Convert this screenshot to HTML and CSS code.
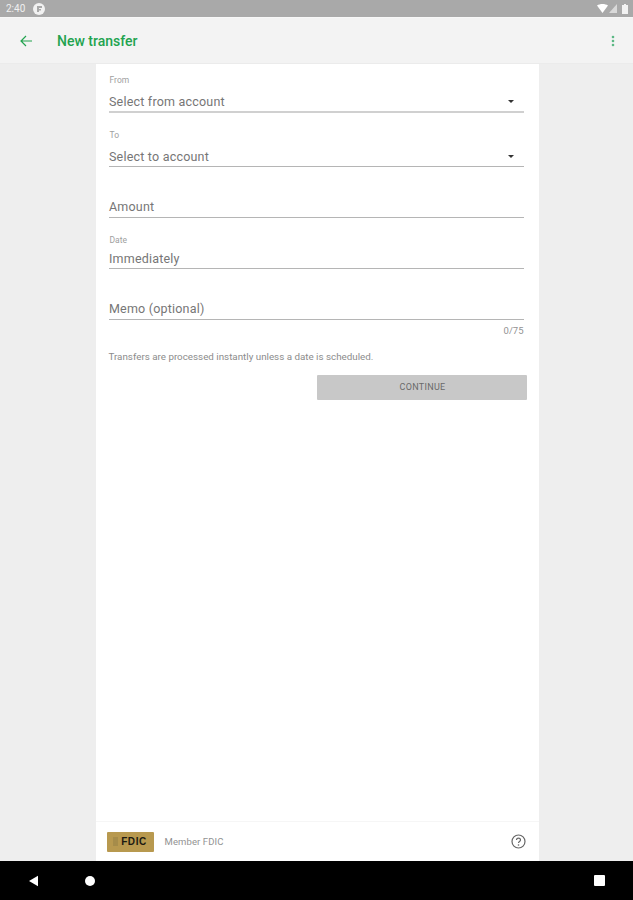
FILE: index.html
```html
<!DOCTYPE html>
<html lang="en">
<head>
    <meta charset="UTF-8">
    <meta name="viewport" content="width=device-width, initial-scale=1.0">
    <title>New transfer</title>
    <link rel="stylesheet" href="styles.css">
</head>
<body>
    <div class="status-bar">
        <div class="status-left">
            <span class="time">2:40</span>
            <span class="status-badge">
                <svg width="8" height="8" viewBox="0 0 8 8"><path d="M2 7V1h5v2H4v1h2v1.5H4V7z" fill="#a9a9a9"/></svg>
            </span>
        </div>
        <div class="status-right">
            <svg width="11" height="9" viewBox="0 0 11 9"><path d="M0 1.5C3 -.5 8 -.5 11 1.5L5.5 9z" fill="#fff"/></svg>
            <svg class="signal" width="8" height="9" viewBox="0 0 8 9"><path d="M8 0v9H0z" fill="#d9d9d9"/></svg>
            <svg width="6" height="10" viewBox="0 0 6 10"><path d="M2 0h2v1h2v9H0V1h2z" fill="#f2f2f2"/></svg>
        </div>
    </div>

    <div class="toolbar">
        <svg class="back-icon" width="14" height="14" viewBox="0 0 14 14"><path d="M13 7H2M7 2 2 7l5 5" fill="none" stroke="#22a34f" stroke-width="1.2"/></svg>
        <span class="toolbar-title">New transfer</span>
        <svg class="more-icon" width="4" height="12" viewBox="0 0 4 12"><circle cx="2" cy="2" r="1.3"/><circle cx="2" cy="6" r="1.3"/><circle cx="2" cy="10" r="1.3"/></svg>
    </div>

    <div class="content">
        <div class="card">
            <div class="form">
                <div class="field field-from">
                    <label>From</label>
                    <div class="value">Select from account<span class="caret"></span></div>
                </div>
                <div class="field field-to">
                    <label>To</label>
                    <div class="value">Select to account<span class="caret"></span></div>
                </div>
                <div class="field field-amount">
                    <div class="value">Amount</div>
                </div>
                <div class="field field-date">
                    <label>Date</label>
                    <div class="value">Immediately</div>
                </div>
                <div class="field field-memo">
                    <div class="value">Memo (optional)</div>
                </div>
                <div class="counter">0/75</div>
                <p class="helper">Transfers are processed instantly unless a date is scheduled.</p>
                <div class="actions">
                    <button class="continue" disabled>CONTINUE</button>
                </div>
            </div>
            <div class="footer">
                <div class="fdic-logo"><span class="fdic-mark"></span>FDIC</div>
                <span class="member">Member FDIC</span>
                <svg class="help-icon" width="15" height="15" viewBox="0 0 15 15">
                    <circle cx="7.5" cy="7.5" r="6.5" fill="none" stroke="#666" stroke-width="1.2"/>
                    <path d="M5.5 6c0-2.6 4-2.6 4 0 0 1.5-2 1.5-2 3" fill="none" stroke="#666" stroke-width="1.2"/>
                    <circle cx="7.5" cy="11" r=".8" fill="#666"/>
                </svg>
            </div>
        </div>
    </div>

    <div class="nav-bar">
        <svg width="12" height="12" viewBox="0 0 12 12"><path d="M1 6 10 .8v10.4z" fill="#fff"/></svg>
        <span class="nav-home"></span>
        <span class="nav-recent"></span>
    </div>
</body>
</html>
```

FILE: styles.css
```css
body {
    font-family: Roboto, "Liberation Sans", sans-serif;
    background-color: #eeeeee;
    margin: 0;
    display: flex;
    flex-direction: column;
    height: 900px;
    overflow: hidden;
}
.status-bar {
    height: 17px;
    background-color: #a9a9a9;
    display: flex;
    justify-content: space-between;
    align-items: center;
    padding: 0 5px 0 6px;
    color: #f0f0f0;
    font-size: 10px;
}
.status-left {
    display: flex;
    align-items: center;
    gap: 8px;
}
.status-badge {
    width: 12px;
    height: 12px;
    border-radius: 50%;
    background-color: #f2f2f2;
    display: flex;
    align-items: center;
    justify-content: center;
}
.status-right {
    display: flex;
    align-items: center;
    gap: 1px;
}
.signal {
    margin-right: 4px;
}
.toolbar {
    height: 46px;
    background-color: #f3f3f3;
    display: flex;
    align-items: center;
    padding: 0 18px 0 19px;
    border-top: 1px solid #f7f7f7;
    box-sizing: border-box;
}
.back-icon {
    margin-right: 24px;
}
.toolbar-title {
    color: #22a34f;
    font-size: 14px;
    font-weight: 500;
    flex: 1;
}
.more-icon {
    fill: #5cb884;
}
.content {
    flex: 1;
    display: flex;
    justify-content: center;
    border-top: 1px solid #ebebeb;
    min-height: 0;
}
.card {
    width: 443px;
    margin-left: 1px;
    background-color: white;
    display: flex;
    flex-direction: column;
}
.form {
    flex: 1;
    padding: 9px 15px 0 13px;
}
.field label {
    display: block;
    font-size: 8.5px;
    line-height: 14px;
    color: #a0a0a0;
    margin-bottom: 6px;
    padding-left: 1px;
}
.value {
    position: relative;
    font-size: 12.5px;
    line-height: 18px;
    letter-spacing: 0.2px;
    color: #767676;
    border-bottom: 1px solid #b5b5b5;
    text-indent: 0.5px;
}
.field-from .value {
    border-bottom: 2px solid #d0d0d0;
}
.field-to {
    margin-top: 15px;
}
.field-amount {
    margin-top: 31px;
}
.field-amount .value,
.field-memo .value {
    padding-bottom: 1px;
}
.field-date {
    margin-top: 15px;
}
.field-date label {
    margin-bottom: 3px;
}
.field-memo {
    margin-top: 31px;
}
.caret {
    position: absolute;
    right: 10px;
    top: 7px;
    width: 0;
    height: 0;
    border-left: 3px solid transparent;
    border-right: 3px solid transparent;
    border-top: 3px solid #333;
}
.counter {
    text-align: right;
    font-size: 9.5px;
    line-height: 12px;
    color: #929292;
    margin-top: 5px;
}
.helper {
    font-size: 9.8px;
    line-height: 12px;
    color: #8c8c8c;
    margin: 14px 0 0;
}
.actions {
    display: flex;
    justify-content: flex-end;
    margin-right: -3px;
    margin-top: 12px;
}
.continue {
    width: 210px;
    height: 25px;
    background-color: #c8c8c8;
    color: #6a6a6a;
    border: none;
    border-radius: 1px;
    font-family: inherit;
    font-size: 9px;
    letter-spacing: 0.3px;
    padding: 0 0 1px 2px;
}
.footer {
    height: 39px;
    display: flex;
    align-items: center;
    padding: 0 13px 0 11px;
    border-top: 1px solid #f6f6f6;
}
.fdic-logo {
    width: 47px;
    height: 20px;
    background-color: #b8994f;
    border-radius: 1px;
    display: flex;
    align-items: center;
    justify-content: center;
    gap: 3px;
    font-family: "Liberation Sans", sans-serif;
    font-size: 10px;
    font-weight: bold;
    letter-spacing: 0.6px;
    color: #1c1a12;
}
.fdic-mark {
    width: 5px;
    height: 9px;
    background-color: #a68c4a;
}
.member {
    margin-left: 11px;
    font-size: 9.5px;
    letter-spacing: 0.1px;
    color: #929292;
    flex: 1;
}
.nav-bar {
    height: 39px;
    background-color: black;
    display: flex;
    align-items: center;
    padding: 0 28px;
}
.nav-home {
    width: 10px;
    height: 10px;
    border-radius: 50%;
    background-color: white;
    margin-left: 45px;
}
.nav-recent {
    width: 11px;
    height: 11px;
    border-radius: 1px;
    background-color: white;
    margin-left: auto;
}
```
